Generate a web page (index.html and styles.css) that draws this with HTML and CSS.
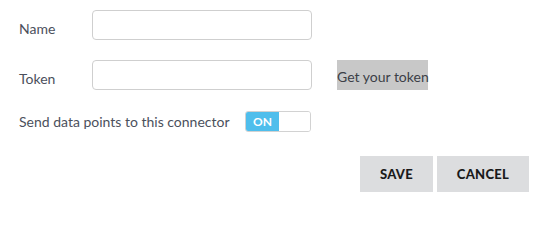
FILE: index.html
```html
<!DOCTYPE html>
<html>
<head>
<meta charset="utf-8">
<link rel="stylesheet" href="styles.css">
</head>
<body>
<form class="form">
  <div class="row">
    <label class="label label-field">Name</label>
    <input class="input" type="text">
  </div>
  <div class="row">
    <label class="label label-field">Token</label>
    <input class="input" type="text">
    <a class="token-link">Get your token</a>
  </div>
  <div class="row row-toggle">
    <label class="label label-wide">Send data points to this connector</label>
    <span class="toggle"><span class="toggle-on">ON</span><span class="toggle-off"></span></span>
  </div>
  <div class="actions">
    <button type="button" class="btn btn-save">SAVE</button>
    <button type="button" class="btn btn-cancel">CANCEL</button>
  </div>
</form>
</body>
</html>
```
FILE: styles.css
```css
html, body {
  margin: 0;
  padding: 0;
  background: #ffffff;
}
body {
  font-family: Lato, "Open Sans", Arial, sans-serif;
  color: #4b505c;
}
.form {
  padding: 10px 8px 0 19px;
  display: flex;
  flex-direction: column;
}
.row {
  display: flex;
  align-items: center;
  height: 30px;
  margin-bottom: 20px;
}
.label {
  width: 73px;
  font-size: 14px;
  color: #4b505c;
}
.label-field {
  padding-top: 6px;
}
.label-wide {
  width: 226px;
}
.input {
  box-sizing: border-box;
  width: 220px;
  height: 30px;
  border: 1px solid #cfcfcf;
  border-radius: 4px;
  margin: 0;
  padding: 0 8px;
  background: #fff;
  outline: none;
}
.token-link {
  margin-left: 25px;
  height: 30px;
  width: 91px;
  box-sizing: border-box;
  background: #c8c8c8;
  color: #3c3f47;
  font-size: 14px;
  padding-top: 3px;
  display: flex;
  align-items: center;
  justify-content: flex-start;
  white-space: nowrap;
}
.row-toggle {
  height: 21px;
  margin-top: 1px;
  margin-bottom: 24px;
}
.toggle {
  display: flex;
  box-sizing: border-box;
  width: 66px;
  height: 21px;
  border: 1px solid #d2d2d2;
  border-radius: 3px;
  overflow: hidden;
}
.toggle-on {
  width: 33px;
  background: #4fbeec;
  color: #fff;
  font-weight: 700;
  font-size: 12px;
  display: flex;
  align-items: center;
  justify-content: center;
}
.toggle-off {
  flex: 1;
  background: #fff;
}
.actions {
  display: flex;
  justify-content: flex-end;
  gap: 4px;
}
.btn {
  height: 36px;
  border: none;
  border-radius: 0;
  background: #dcdddf;
  color: #1a1a1a;
  font-family: Lato, "Open Sans", Arial, sans-serif;
  font-weight: 900;
  font-size: 13px;
  letter-spacing: 0.3px;
  padding: 0;
  margin: 0;
}
.btn-save { width: 73px; }
.btn-cancel { width: 92px; }
```
